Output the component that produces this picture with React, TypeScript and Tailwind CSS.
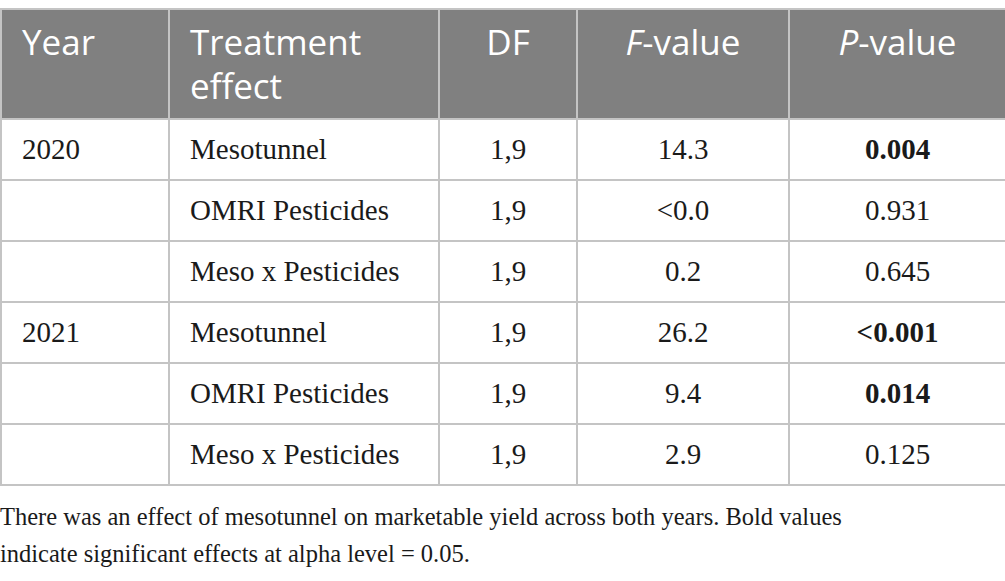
import React from "react";

const rows: { year: string; effect: string; df: string; f: string; p: string; bold: boolean }[] = [
  { year: "2020", effect: "Mesotunnel", df: "1,9", f: "14.3", p: "0.004", bold: true },
  { year: "", effect: "OMRI Pesticides", df: "1,9", f: "<0.0", p: "0.931", bold: false },
  { year: "", effect: "Meso x Pesticides", df: "1,9", f: "0.2", p: "0.645", bold: false },
  { year: "2021", effect: "Mesotunnel", df: "1,9", f: "26.2", p: "<0.001", bold: true },
  { year: "", effect: "OMRI Pesticides", df: "1,9", f: "9.4", p: "0.014", bold: true },
  { year: "", effect: "Meso x Pesticides", df: "1,9", f: "2.9", p: "0.125", bold: false },
];

export default function App() {
  return (
    <div className="w-[1005px] h-[581px] bg-white pt-[8px] overflow-hidden">
      <table className="w-[1005px] border-collapse table-fixed">
        <colgroup>
          <col className="w-[168px]" />
          <col className="w-[270px]" />
          <col className="w-[138px]" />
          <col className="w-[212px]" />
          <col className="w-[217px]" />
        </colgroup>
        <thead>
          <tr className="h-[110px] bg-[#808080] text-white font-['Open_Sans',sans-serif] text-[35px] leading-[44px]">
            <th className="border-2 border-[#c4c4c4] align-top text-left font-normal pl-[20px] pt-[10px]">Year</th>
            <th className="border-2 border-[#c4c4c4] align-top text-left font-normal pl-[20px] pt-[10px]">
              <div>Treatment</div>
              <div>effect</div>
            </th>
            <th className="border-2 border-[#c4c4c4] align-top text-center font-normal pt-[10px]">DF</th>
            <th className="border-2 border-[#c4c4c4] align-top text-center font-normal pt-[10px]"><i>F</i>-value</th>
            <th className="border-2 border-[#c4c4c4] align-top text-center font-normal pt-[10px]"><i>P</i>-value</th>
          </tr>
        </thead>
        <tbody className="font-['Liberation_Serif',serif] text-[29px] text-[#1a1a1a]">
          {rows.map((r, i) => (
            <tr key={i} className="h-[61px]">
              <td className="border-2 border-[#c4c4c4] pl-[20px]">{r.year}</td>
              <td className="border-2 border-[#c4c4c4] pl-[20px]">{r.effect}</td>
              <td className="border-2 border-[#c4c4c4] text-center">{r.df}</td>
              <td className="border-2 border-[#c4c4c4] text-center">{r.f}</td>
              <td className={`border-2 border-[#c4c4c4] text-center ${r.bold ? "font-bold" : ""}`}>{r.p}</td>
            </tr>
          ))}
        </tbody>
      </table>
      <p className="font-['Liberation_Serif',serif] text-[24.5px] leading-[37px] text-[#1a1a1a] mt-[12px] w-[880px]">
        There was an effect of mesotunnel on marketable yield across both years. Bold values indicate significant effects at alpha level = 0.05.
      </p>
    </div>
  );
}
